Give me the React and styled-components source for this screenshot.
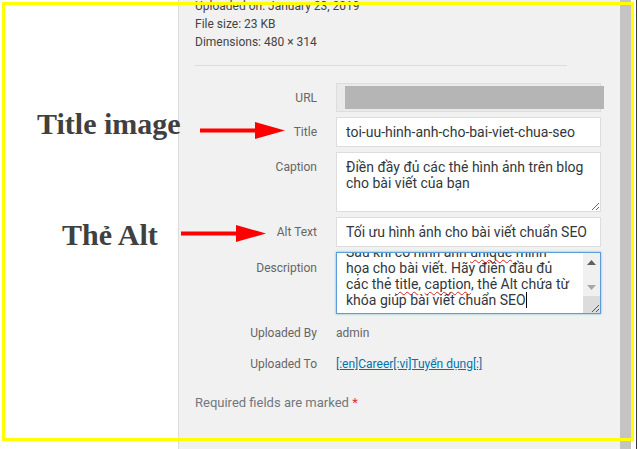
import React from "react";
import styled, { createGlobalStyle } from "styled-components";

const GlobalStyle = createGlobalStyle`
  html, body {
    margin: 0;
    padding: 0;
    background: #fff;
  }
  body {
    font-family: Roboto, "Open Sans", sans-serif;
  }
`;

const Frame = styled.div`
  position: relative;
  width: 638px;
  height: 449px;
  overflow: hidden;
  display: flex;
  background: #fff;
`;

const LeftGutter = styled.div`
  width: 178px;
  flex-shrink: 0;
`;

const Panel = styled.div`
  width: 442px;
  flex-shrink: 0;
  box-sizing: border-box;
  border-left: 1px solid #dcdcdc;
  background: #f1f1f1;
  padding-left: 16px;
  color: #666;
`;

const WindowScroll = styled.div`
  width: 11px;
  flex-shrink: 0;
  background: #c4c4c4;
`;

const RightEdge = styled.div`
  width: 5px;
  flex-shrink: 0;
  border-right: 1px solid #3a3a3a;
`;

const Details = styled.div`
  margin-top: -3px;
  font-size: 12px;
  line-height: 18px;
  color: #444;
`;

const Separator = styled.div`
  width: 372px;
  height: 1px;
  background: #dcdcdc;
  margin-top: 14px;
`;

const Form = styled.div`
  margin-top: 17px;
  display: grid;
  grid-template-columns: 122px 265px;
  column-gap: 19px;
  row-gap: 5px;
`;

const Label = styled.label`
  font-size: 12px;
  line-height: 17px;
  padding-top: ${(p) => (p.$top ?? 7)}px;
  text-align: right;
  color: #666;
`;

const TextInput = styled.input`
  box-sizing: border-box;
  width: 265px;
  height: ${(p) => p.$h || 30}px;
  margin: 0;
  padding: 0 9px;
  border: 1px solid #ddd;
  background: #fff;
  font-family: inherit;
  font-size: 14px;
  color: #32373c;
  outline: none;
`;

const UrlBox = styled.div`
  box-sizing: border-box;
  width: 265px;
  height: 29px;
  border: 1px solid #ddd;
  background: #eaeaea;
  padding: 2px 0 0 8px;
`;

const Redact = styled.div`
  width: 259px;
  height: 23px;
  background: #b5b5b5;
`;

const Caption = styled.textarea`
  box-sizing: border-box;
  width: 265px;
  height: 60px;
  margin: 0;
  padding: 6px 9px;
  border: 1px solid #ddd;
  background: #fff;
  font-family: inherit;
  font-size: 14px;
  line-height: 16px;
  color: #32373c;
  resize: vertical;
  outline: none;
  display: block;
`;

const DescBox = styled.div`
  box-sizing: border-box;
  width: 265px;
  height: 62px;
  border: 1px solid #5b9dd9;
  box-shadow: 0 0 2px rgba(30, 140, 190, 0.6);
  background: #fff;
  display: flex;
  overflow: hidden;
`;

const DescText = styled.div`
  flex: 1;
  padding: 0 9px;
  margin-top: -9px;
  font-size: 14px;
  line-height: 16px;
  color: #32373c;
`;

const Line = styled.div`
  white-space: nowrap;
`;

const Misspelt = styled.span`
  text-decoration: underline wavy #e02020;
  text-decoration-thickness: 1px;
  text-underline-offset: 2px;
  text-decoration-skip-ink: none;
`;

const Caret = styled.span`
  display: inline-block;
  width: 1px;
  height: 16px;
  background: #000;
  vertical-align: top;
`;

const FakeBar = styled.div`
  width: 17px;
  background: #f0f0f0;
  display: flex;
  flex-direction: column;
  align-items: center;
`;

const ArrowBtn = styled.div`
  height: 17px;
  width: 17px;
  display: flex;
  align-items: center;
  justify-content: center;
  margin-top: ${(p) => p.$mt || 0}px;
`;

const Corner = styled.div`
  margin-top: auto;
  width: 17px;
  height: 17px;
  background: #dcdcdc;
  display: flex;
  align-items: flex-end;
  justify-content: flex-end;
`;

const InfoRow = styled.div`
  display: grid;
  grid-template-columns: 122px 265px;
  column-gap: 19px;
  margin-top: ${(p) => p.$mt}px;
  font-size: 12px;
  line-height: 17px;
`;

const InfoLabel = styled.div`
  text-align: right;
  color: #666;
`;

const InfoValue = styled.div`
  color: #666;
`;

const Link = styled.a`
  color: #0073aa;
  text-decoration: underline;
`;

const Required = styled.p`
  margin: 21px 0 0;
  font-size: 13px;
  line-height: 18px;
  color: #72777c;
`;

const Star = styled.span`
  color: #dc3232;
`;

/* annotation layer drawn over the screenshot */
const Highlight = styled.div`
  position: absolute;
  left: 2px;
  top: 2px;
  width: 632px;
  height: 439px;
  box-sizing: border-box;
  border: 3px solid #ffff00;
  pointer-events: none;
`;

const Note = styled.div`
  position: absolute;
  left: ${(p) => p.$x}px;
  top: ${(p) => p.$y}px;
  font-family: "Liberation Serif", "Times New Roman", serif;
  font-weight: 700;
  font-size: 30px;
  line-height: 30px;
  color: #404040;
  white-space: nowrap;
`;

const ArrowMark = styled.svg`
  position: absolute;
  left: ${(p) => p.$x}px;
  top: ${(p) => p.$y}px;
`;

const RedArrow = ({ x, y }) => (
  <ArrowMark $x={x} $y={y} width="86" height="17" viewBox="0 0 86 17">
    <rect x="0" y="6.5" width="56" height="4" fill="#ff0000" />
    <polygon points="55,0 85,8.5 55,17" fill="#ff0000" />
  </ArrowMark>
);

const Grip = () => (
  <svg width="10" height="10" viewBox="0 0 10 10">
    <line x1="9" y1="2" x2="2" y2="9" stroke="#555" strokeWidth="1" />
    <line x1="9" y1="6" x2="6" y2="9" stroke="#555" strokeWidth="1" />
  </svg>
);

const App = () => (
  <>
    <GlobalStyle />
    <Frame>
      <LeftGutter />
      <Panel>
        <Details>
          <div>Uploaded on: January 23, 2019</div>
          <div>File size: 23 KB</div>
          <div>Dimensions: 480 × 314</div>
        </Details>
        <Separator />
        <Form>
          <Label>URL</Label>
          <UrlBox>
            <Redact />
          </UrlBox>

          <Label>Title</Label>
          <TextInput
            readOnly
            spellCheck={false}
            value="toi-uu-hinh-anh-cho-bai-viet-chua-seo"
          />

          <Label>Caption</Label>
          <Caption
            readOnly
            spellCheck={false}
            value={"Điền đầy đủ các thẻ hình ảnh trên blog\ncho bài viết của bạn"}
          />

          <Label>Alt Text</Label>
          <TextInput
            readOnly
            spellCheck={false}
            value="Tối ưu hình ảnh cho bài viết chuẩn SEO"
          />

          <Label $top={8}>Description</Label>
          <DescBox>
            <DescText>
              <Line>
                Sau khi có hình ảnh <Misspelt>unique</Misspelt> minh
              </Line>
              <Line>họa cho bài viết. Hãy điền đầu đủ</Line>
              <Line>
                các thẻ <Misspelt>title</Misspelt>,{" "}
                <Misspelt>caption</Misspelt>, thẻ Alt chứa từ
              </Line>
              <Line>
                khóa giúp bài viết chuẩn SEO
                <Caret />
              </Line>
            </DescText>
            <FakeBar>
              <ArrowBtn $mt={1}>
                <svg width="9" height="5" viewBox="0 0 9 5">
                  <polygon points="0,5 4.5,0 9,5" fill="#606060" />
                </svg>
              </ArrowBtn>
              <ArrowBtn $mt={8}>
                <svg width="9" height="5" viewBox="0 0 9 5">
                  <polygon points="0,0 9,0 4.5,5" fill="#a8a8a8" />
                </svg>
              </ArrowBtn>
              <Corner>
                <Grip />
              </Corner>
            </FakeBar>
          </DescBox>
        </Form>

        <InfoRow $mt={11}>
          <InfoLabel>Uploaded By</InfoLabel>
          <InfoValue>admin</InfoValue>
        </InfoRow>
        <InfoRow $mt={14}>
          <InfoLabel>Uploaded To</InfoLabel>
          <InfoValue>
            <Link href="#">[:en]Career[:vi]Tuyển dụng[:]</Link>
          </InfoValue>
        </InfoRow>
        <Required>
          Required fields are marked <Star>*</Star>
        </Required>
      </Panel>
      <WindowScroll />
      <RightEdge />

      <Note $x={37} $y={109}>Title image</Note>
      <Note $x={62} $y={220}>Thẻ Alt</Note>
      <RedArrow x={200} y={122} />
      <RedArrow x={181} y={225} />
      <Highlight />
    </Frame>
  </>
);

export default App;
